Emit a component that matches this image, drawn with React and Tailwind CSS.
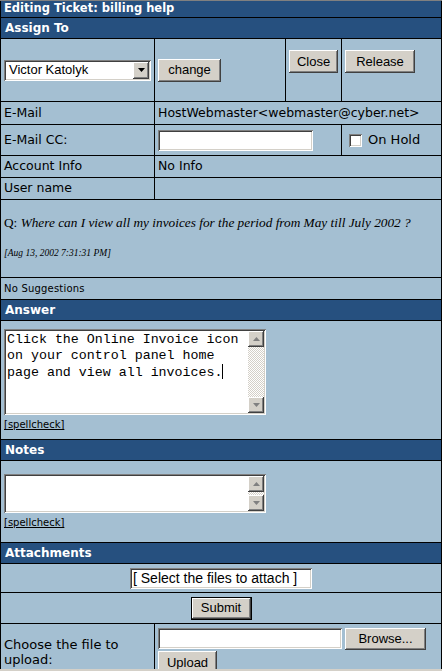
import React from 'react'

const raised = "bg-[#d4d0c8] shadow-[inset_-1px_-1px_#404040,inset_1px_1px_#ffffff,inset_-2px_-2px_#808080,inset_2px_2px_#d4d0c8]";
const sunken = "bg-white shadow-[inset_1px_1px_#808080,inset_-1px_-1px_#ffffff,inset_2px_2px_#404040,inset_-2px_-2px_#d4d0c8]";
const arial = "font-['Liberation_Sans',Arial,sans-serif] text-[13px] text-black";
const verdana = "font-['DejaVu_Sans',Verdana,sans-serif] text-[12.5px] text-black";
const header = "h-[21px] border-b border-black bg-[#26507f] text-white font-bold text-[12px] pl-[4px] flex items-center font-['DejaVu_Sans',Verdana,sans-serif]";

function Button({ children, className = "" }) {
    return <div className={`${raised} ${arial} flex items-center justify-center shrink-0 ${className}`}>{children}</div>
}

function Arrow({ dir, color = "#808080" }) {
    return (
        <svg width="7" height="4" viewBox="0 0 7 4">
            <path d={dir === 'up' ? "M3.5 0L7 4H0Z" : "M0 0H7L3.5 4Z"} fill={color} />
        </svg>
    )
}

function ScrollButton({ dir }) {
    return (
        <div className={`${raised} w-[16px] h-[16px] flex items-center justify-center`}>
            <Arrow dir={dir} />
        </div>
    )
}

const checker = "bg-[image:repeating-conic-gradient(#d4d0c8_0%_25%,#ffffff_0%_50%)] bg-[length:2px_2px]";

function TextBox({ height, children }) {
    return (
        <div className={`${sunken} w-[262px] ${height} p-[2px] flex`}>
            <div className="flex-1 pl-[1px] pt-[1px] font-['Liberation_Mono','Courier_New',monospace] text-[13.3px] leading-[16px] text-black">
                {children}
            </div>
            <div className="w-[16px] flex flex-col">
                <ScrollButton dir="up" />
                <div className={`flex-1 ${checker}`} />
                <ScrollButton dir="down" />
            </div>
        </div>
    )
}

function Spellcheck() {
    return <div className="mt-[3px] font-['DejaVu_Sans',Verdana,sans-serif] text-[10px] leading-[13px] text-black underline">[spellcheck]</div>
}

export default function App() {
    return (
        <div className="w-[442px] h-[671px] overflow-hidden bg-[#a4bfd2]">
            <div className="h-px bg-[#808080]" />
            <div className="h-[668px] overflow-hidden border-x border-black">
                <div className="h-[17px] border-b border-black bg-[#26507f] text-white font-bold text-[11.5px] pl-[3px] flex items-center font-['DejaVu_Sans',Verdana,sans-serif]">
                    Editing Ticket: billing help
                </div>
                <div className={`${header} h-[20px]`}>Assign To</div>

                {/* assign row */}
                <div className="h-[63px] border-b border-black flex">
                    <div className="w-[154px] border-r border-black flex items-center pl-[3px]">
                        <div className={`${sunken} w-[147px] h-[21px] p-[2px] flex items-center`}>
                            <span className={`${arial} flex-1 pl-[3px] text-[13.5px]`}>Victor Katolyk</span>
                            <div className={`${raised} w-[16px] h-[17px] flex items-center justify-center`}>
                                <Arrow dir="down" color="#000" />
                            </div>
                        </div>
                    </div>
                    <div className="w-[131px] border-r border-black flex items-center pl-[3px]">
                        <Button className="w-[63px] h-[23px]">change</Button>
                    </div>
                    <div className="w-[56px] border-r border-black pl-[3px] pt-[11px]">
                        <Button className="w-[49px] h-[23px]">Close</Button>
                    </div>
                    <div className="flex-1 pl-[3px] pt-[11px]">
                        <Button className="w-[70px] h-[23px]">Release</Button>
                    </div>
                </div>

                <div className={`h-[23px] border-b border-black flex ${verdana}`}>
                    <div className="w-[154px] border-r border-black flex items-center pl-[3px]">E-Mail</div>
                    <div className="flex-1 flex items-center pl-[3px]">HostWebmaster&lt;webmaster@cyber.net&gt;</div>
                </div>

                <div className={`h-[31px] border-b border-black flex ${verdana}`}>
                    <div className="w-[154px] border-r border-black flex items-center pl-[3px]">E-Mail CC:</div>
                    <div className="w-[187px] border-r border-black flex items-center pl-[3px]">
                        <div className={`${sunken} w-[155px] h-[21px]`} />
                    </div>
                    <div className="flex-1 flex items-center pl-[7px] gap-[6px]">
                        <div className={`${sunken} w-[13px] h-[13px] mt-[1px]`} />
                        <span className="text-[13px]">On Hold</span>
                    </div>
                </div>

                <div className={`h-[22px] border-b border-black flex ${verdana}`}>
                    <div className="w-[154px] border-r border-black flex items-center pl-[3px]">Account Info</div>
                    <div className="flex-1 flex items-center pl-[3px]">No Info</div>
                </div>

                <div className={`h-[22px] border-b border-black flex ${verdana}`}>
                    <div className="w-[154px] border-r border-black flex items-center pl-[3px]">User name</div>
                    <div className="flex-1" />
                </div>

                <div className="h-[78px] border-b border-black pl-[3px] pt-[15px] font-['Liberation_Serif','Times_New_Roman',serif] text-black">
                    <div className="text-[13.3px] leading-[15px]">
                        Q: <i>Where can I view all my invoices for the period from May till July 2002 ?</i>
                    </div>
                    <div className="mt-[17px] text-[9.5px] leading-[12px] italic">[Aug 13, 2002 7:31:31 PM]</div>
                </div>

                <div className="h-[22px] border-b border-black flex items-center pl-[3px] font-['DejaVu_Sans',Verdana,sans-serif] text-[10px] tracking-[0.2px] text-black">
                    No Suggestions
                </div>

                <div className={header}>Answer</div>
                <div className="h-[119px] border-b border-black pl-[3px] pt-[8px]">
                    <TextBox height="h-[86px]">
                        Click the Online Invoice icon<br />
                        on your control panel home<br />
                        page and view all invoices.<span className="inline-block w-px h-[15px] bg-black align-[-3px]" />
                    </TextBox>
                    <Spellcheck />
                </div>

                <div className={header}>Notes</div>
                <div className="h-[82px] border-b border-black pl-[3px] pt-[13px]">
                    <TextBox height="h-[39px]" />
                    <Spellcheck />
                </div>

                <div className={header}>Attachments</div>
                <div className="h-[29px] border-b border-black flex items-center justify-center">
                    <div className={`${sunken} w-[182px] h-[21px] pl-[3px] flex items-center ${arial} text-[14px]`}>
                        [ Select the files to attach ]
                    </div>
                </div>

                <div className="h-[31px] border-b border-black flex items-center justify-center">
                    <div className="border border-black">
                        <Button className="w-[59px] h-[21px]">Submit</Button>
                    </div>
                </div>

                <div className="h-[60px] flex">
                    <div className={`w-[154px] border-r border-black pl-[3px] pt-[13px] leading-[15px] ${verdana} text-[13px]`}>
                        Choose the file to<br />upload:
                    </div>
                    <div className="flex-1 pl-[3px] pt-[4px]">
                        <div className="flex gap-[3px]">
                            <div className={`${sunken} w-[184px] h-[21px]`} />
                            <Button className="w-[81px] h-[22px]">Browse...</Button>
                        </div>
                        <Button className="w-[59px] h-[24px] mt-[1px]">Upload</Button>
                    </div>
                </div>
            </div>
            <div className="h-[2px] bg-[#d4d0c8]" />
        </div>
    )
}
